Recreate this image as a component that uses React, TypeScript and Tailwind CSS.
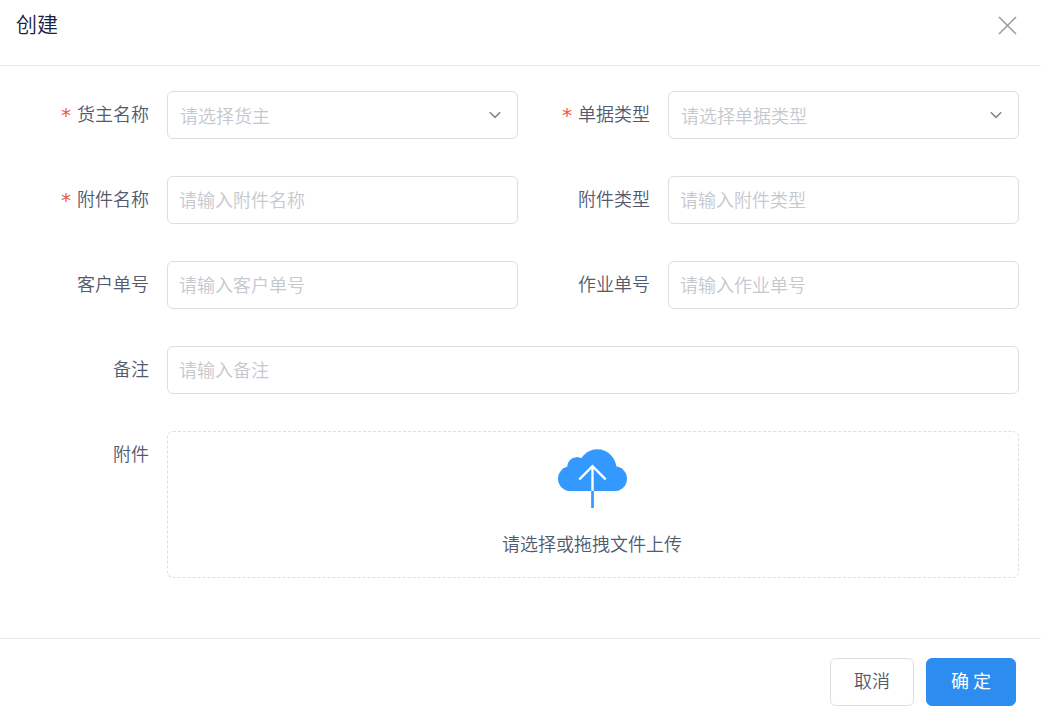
import { useId, type ReactNode } from "react";

const fieldClass =
  "h-12 w-full min-w-0 rounded-md border border-[#dcdee2] bg-white outline-none focus:border-[#2d8cf0]";

type RowProps = {
  label: string;
  htmlFor: string;
  required?: boolean;
  wide?: boolean;
  children: ReactNode;
};

function Row({ label, htmlFor, required, wide, children }: RowProps) {
  return (
    <div className={wide ? "col-span-2 flex items-start" : "flex items-start"}>
      <label
        htmlFor={htmlFor}
        className="flex h-12 w-[150px] shrink-0 items-center justify-end gap-[5px] pr-[18px] pb-1"
      >
        {required && (
          <span className="pt-1 font-['DejaVu_Sans_Mono',monospace] text-xl leading-7 text-[#f0593a]">*</span>
        )}
        <span>{label}</span>
      </label>
      <div className="min-w-0 flex-1">{children}</div>
    </div>
  );
}

function TextField({ label, required, wide }: { label: string; required?: boolean; wide?: boolean }) {
  const id = useId();
  return (
    <Row label={label} htmlFor={id} required={required} wide={wide}>
      <input
        id={id}
        type="text"
        placeholder={`请输入${label}`}
        className={`${fieldClass} px-[11px] pb-0.5 placeholder:text-[#c5c8ce]`}
      />
    </Row>
  );
}

function SelectField({ label, placeholder }: { label: string; placeholder: string }) {
  const id = useId();
  return (
    <Row label={label} htmlFor={id} required>
      <div className="grid items-center">
        <select
          id={id}
          required
          defaultValue=""
          className={`${fieldClass} col-start-1 row-start-1 appearance-none px-3 pb-px text-[#c5c8ce]`}
        >
          <option value="">{placeholder}</option>
        </select>
        <svg
          viewBox="0 0 12 8"
          className="pointer-events-none col-start-1 row-start-1 mr-[17px] h-2 w-3 justify-self-end"
          fill="none"
          stroke="#808695"
          strokeWidth="1.6"
          aria-hidden="true"
        >
          <path d="M0.8 1.2 6 6.4 11.2 1.2" />
        </svg>
      </div>
    </Row>
  );
}

function CloudUpload() {
  return (
    <svg viewBox="0 0 207 177" className="h-[59px] w-[69px]" aria-hidden="true">
      <g fill="#3399ff">
        <circle cx="37" cy="89" r="37" />
        <circle cx="55" cy="52" r="27" />
        <circle cx="118" cy="58" r="57" />
        <circle cx="170" cy="89" r="37" />
        <path d="M37 55h133v71H37z" />
        <path d="M56 25q8 0 14 3l8-8v40H56z" />
        <path d="M99.500 126h8v51h-8z" />
      </g>
      <path d="M103.500 126V52M64 91l39.500-39.500L143 91" fill="none" stroke="#fff" strokeWidth="7" />
    </svg>
  );
}

export default function App() {
  const uploadId = useId();
  return (
    <section
      role="dialog"
      aria-labelledby="dialog-title"
      className="bg-white font-['Noto_Sans_CJK_SC',sans-serif] text-lg leading-7 font-[350] text-[#515a6e]"
    >
      <header className="flex items-start justify-between border-b border-[#e8eaec] pt-2 pr-6 pb-[27px] pl-4">
        <h1 id="dialog-title" className="text-[21px] leading-[30px] font-[350] text-[#17233d]">
          创建
        </h1>
        <button type="button" aria-label="关闭" className="pt-2">
          <svg viewBox="0 0 19 19" className="h-[19px] w-[19px]" stroke="#999" strokeWidth="1.5" aria-hidden="true">
            <path d="M1 1 18 18M18 1 1 18" />
          </svg>
        </button>
      </header>

      <form id="create-form" className="grid grid-cols-2 gap-y-[37px] pt-[25px] pr-[22px] pb-[60px] pl-[17px]">
        <SelectField label="货主名称" placeholder="请选择货主" />
        <SelectField label="单据类型" placeholder="请选择单据类型" />
        <TextField label="附件名称" required />
        <TextField label="附件类型" />
        <TextField label="客户单号" />
        <TextField label="作业单号" />
        <TextField label="备注" wide />
        <Row label="附件" htmlFor={uploadId} wide>
          <label
            htmlFor={uploadId}
            className="flex cursor-pointer flex-col items-center gap-[21px] rounded-md border border-dashed border-[#dcdee2] pt-[17px] pr-0.5 pb-5"
          >
            <CloudUpload />
            <span>请选择或拖拽文件上传</span>
            <input id={uploadId} type="file" className="sr-only" />
          </label>
        </Row>
      </form>

      <footer className="flex justify-end gap-3 border-t border-[#e8eaec] pt-[19px] pr-[25px] pb-1.5">
        <button type="button" className="h-12 rounded-md border border-[#dcdee2] px-[23px] pb-1">
          取消
        </button>
        <button
          type="submit"
          form="create-form"
          className="h-12 rounded-md border border-[#2d8cf0] bg-[#2d8cf0] px-6 pb-1 font-normal text-white"
        >
          确 定
        </button>
      </footer>
    </section>
  );
}
